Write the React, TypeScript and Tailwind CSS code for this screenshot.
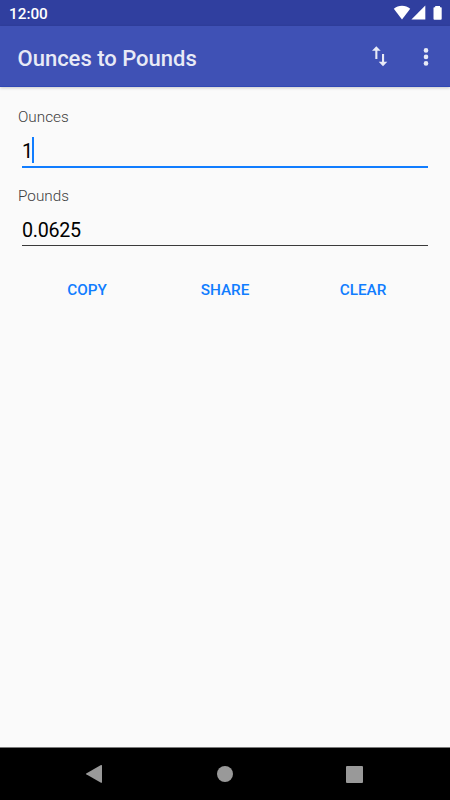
import React, { useState } from 'react';

const formatPounds = (ounces: string) => {
  const value = parseFloat(ounces);
  return Number.isNaN(value) ? '' : String(value / 16);
};

const StatusBar: React.FC = () => (
  <div className="h-[26px] shrink-0 bg-[#303f9f] flex items-center justify-between pl-[9px] pr-[8px] text-white">
    <span className="text-[15.3px] leading-[26px] font-medium pt-[2px]">12:00</span>
    <svg width="49" height="26" viewBox="0 0 49 26" fill="currentColor">
      <path d="M0.8 8.7C5.2 4.8 12.8 4.8 17.2 8.7L9 19.4z" />
      <path d="M32.3 5.6V19.6H18.4z" />
      <path d="M42.2 6V7.3H41.2Q40.5 7.3 40.5 8V18.8Q40.5 19.8 41.4 19.8H47.8Q48.7 19.8 48.7 18.8V8Q48.7 7.3 48 7.3H47V6z" />
    </svg>
  </div>
);

const AppBar: React.FC<{ title: string }> = ({ title }) => (
  <header className="h-[61px] shrink-0 bg-[#3f51b5] border-b border-[#3048b4] flex items-center pt-[2px] pl-[17.5px] pr-[14px] text-[#e8eaf6] shadow-[0_1px_3px_rgba(0,0,0,0.2)]">
    <h1 className="flex-1 text-[22px] leading-[26px] font-medium pt-[3px]">{title}</h1>
    <button aria-label="Swap units" className="mr-[23px]">
      <svg width="26" height="26" viewBox="0 0 26 26" fill="currentColor">
        <path d="M9.3 2.3L5 6.8H8.3V15H10.4V6.8H13.7z" />
        <path d="M16 22.3L20.3 17.8H17.1V10H15V17.8H11.7z" />
      </svg>
    </button>
    <button aria-label="More options">
      <svg width="20" height="26" viewBox="0 0 20 26" fill="currentColor">
        <circle cx="10" cy="6.4" r="2.3" />
        <circle cx="10" cy="12.9" r="2.3" />
        <circle cx="10" cy="19.4" r="2.3" />
      </svg>
    </button>
  </header>
);

const NavigationBar: React.FC = () => (
  <nav className="h-[53px] shrink-0 bg-black border-t border-[#7a7a7a] flex items-center justify-between pl-[85px] pr-[87px] text-[#999999]">
    <button aria-label="Back">
      <svg width="18" height="20" viewBox="0 0 18 20" fill="currentColor">
        <path d="M1.2 9.4L16 1Q17 0.6 17 1.6V18.2Q17 19.2 16 18.7L1.2 10.2Q0.6 9.8 1.2 9.4z" />
      </svg>
    </button>
    <button aria-label="Home" className="size-[16px] rounded-full bg-[#999999]" />
    <button aria-label="Recent apps" className="size-[17px] rounded-[1px] bg-[#999999]" />
  </nav>
);

const App: React.FC = () => {
  const [ounces, setOunces] = useState('1');
  const actions = [
    { label: 'COPY', onClick: () => navigator.clipboard?.writeText(formatPounds(ounces)) },
    { label: 'SHARE', onClick: () => navigator.share?.({ text: formatPounds(ounces) }) },
    { label: 'CLEAR', onClick: () => setOunces('') },
  ];

  return (
    <div className="h-screen w-full flex flex-col overflow-hidden bg-[#fafafa] font-['Roboto',sans-serif]">
      <StatusBar />
      <AppBar title="Ounces to Pounds" />
      <main className="flex-1 px-[18px] pt-[20px]">
        <div className="h-[20px] leading-[20px] text-[15.3px] font-light text-[#404040]">Ounces</div>
        <div
          tabIndex={0}
          onKeyDown={e => {
            if (e.key === 'Backspace') setOunces(ounces.slice(0, -1));
            else if (/^[0-9.]$/.test(e.key)) setOunces(ounces + e.key);
          }}
          className="mx-[4px] h-[41px] pt-[10px] flex items-start border-b-2 border-[#117dff] text-[19.7px] leading-[30px] tracking-[-0.3px] text-black outline-none"
        >
          <span>{ounces}</span>
          <span className="-ml-[0.7px] w-[2px] h-[26px] bg-[#117dff]" />
        </div>
        <div className="mt-[18px] h-[20px] leading-[20px] text-[15.3px] font-light text-[#404040]">Pounds</div>
        <div className="mx-[4px] h-[40px] pt-[10px] border-b border-[#3a3a3a] text-[19.7px] leading-[30px] tracking-[-0.3px] text-black">
          {formatPounds(ounces)}
        </div>
        <div className="mt-[24px] grid grid-cols-3">
          {actions.map(action => (
            <button
              key={action.label}
              onClick={action.onClick}
              className="h-[40px] text-[15.3px] font-medium text-[#117dff]"
            >
              {action.label}
            </button>
          ))}
        </div>
      </main>
      <NavigationBar />
    </div>
  );
};

export default App;
